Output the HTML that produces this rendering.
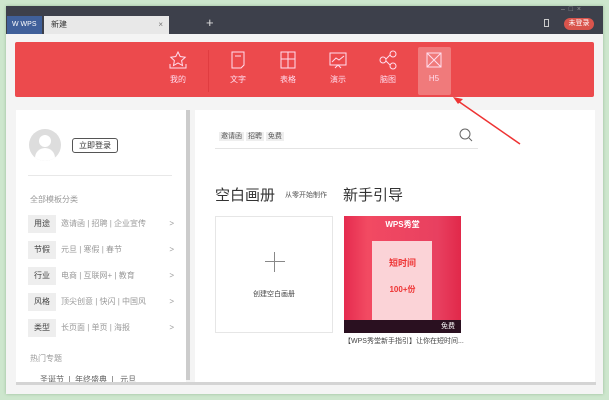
<!DOCTYPE html>
<html><head><meta charset="utf-8"><style>
*{margin:0;padding:0;box-sizing:border-box}
body{width:609px;height:400px;background:#cde6cd;font-family:"Liberation Sans","Noto Sans CJK SC",sans-serif;position:relative;overflow:hidden;font-size:8px;color:#555}
.a{position:absolute}
.win{left:6px;top:6px;width:597px;height:388px;background:#f4f4f4;overflow:hidden;box-shadow:0 0 3px #9b9}
.title{left:0;top:0;width:597px;height:28px;background:#3d404b}
.row{position:absolute;left:12px;height:18px;width:146px;font-size:8px;color:#999;line-height:18px}
.row b{display:inline-block;width:28px;background:#eee;color:#444;text-align:center;font-weight:normal;margin-right:5px}
.row i{position:absolute;right:0;font-style:normal}
.ic{position:absolute;top:8px;width:20px;height:20px}
.lb{position:absolute;top:32px;color:#fde;font-size:8px;width:40px;text-align:center}
</style></head><body>
<div class="a win">
 <div class="a title">
  <div class="a" style="left:1px;top:10px;width:35px;height:18px;background:#40609a;color:#fff;font-size:7px;line-height:18px;padding-left:5px">W WPS</div>
  <div class="a" style="left:38px;top:10px;width:125px;height:18px;background:#e8e8e8;color:#333;font-size:8px;line-height:18px;padding-left:7px">新建<span style="position:absolute;right:6px;color:#777">×</span></div>
  <div class="a" style="left:200px;top:9px;color:#ddd;font-size:13px">+</div>
  <div class="a" style="left:538px;top:13px;width:5px;height:8px;border:1px solid #ccc"></div>
  <div class="a" style="left:558px;top:12px;width:30px;height:12px;background:#d9544c;border-radius:6px;color:#fff;font-size:7px;line-height:12px;text-align:center">未登录</div>
  <div class="a" style="left:555px;top:0;color:#999;font-size:7px">–&nbsp;&nbsp;□&nbsp;&nbsp;×</div>
 </div>
 <div class="a" style="left:9px;top:36px;width:579px;height:55px;background:#ec4a4d;border-radius:2px">
  <div class="a" style="left:403px;top:5px;width:33px;height:48px;background:#f07a7b;border-radius:2px"></div>
  <div class="a" style="left:193px;top:8px;width:1px;height:42px;background:#e03c40"></div>
  <svg class="ic" style="left:153px" viewBox="0 0 20 20" fill="none" stroke="#fde" stroke-width="1"><path d="M10 2l2.2 4.5 5 .7-3.6 3.4.9 4.9L10 13l-4.5 2.5.9-4.9L2.8 7.2l5-.7z"/><path d="M2 14v4h16v-4"/></svg><div class="lb" style="left:143px">我的</div>
  <svg class="ic" style="left:213px" viewBox="0 0 20 20" fill="none" stroke="#fde"><path d="M4 2h12v13l-3 3H4z"/><path d="M7 6h6"/></svg><div class="lb" style="left:203px">文字</div>
  <svg class="ic" style="left:263px" viewBox="0 0 20 20" fill="none" stroke="#fde"><rect x="3" y="2" width="14" height="16"/><path d="M3 9h14M10 2v16"/></svg><div class="lb" style="left:253px">表格</div>
  <svg class="ic" style="left:313px" viewBox="0 0 20 20" fill="none" stroke="#fde"><rect x="2" y="3" width="16" height="12"/><path d="M4 12l4-4 3 2 5-4M7 18l3-3 3 3"/></svg><div class="lb" style="left:303px">演示</div>
  <svg class="ic" style="left:363px" viewBox="0 0 20 20" fill="none" stroke="#fde"><circle cx="5" cy="10" r="3"/><circle cx="15" cy="4" r="3"/><circle cx="15" cy="16" r="3"/><path d="M8 9l4-4M8 11l4 4"/></svg><div class="lb" style="left:353px">脑图</div>
  <svg class="ic" style="left:409px" viewBox="0 0 20 20" fill="none" stroke="#fde"><rect x="3" y="3" width="14" height="14"/><path d="M3 3l14 14M17 3L3 17"/></svg><div class="lb" style="left:399px">H5</div>
 </div>
 <div class="a" style="left:10px;top:104px;width:170px;height:272px;background:#fff">
  <div class="a" style="left:13px;top:19px;width:32px;height:32px;border-radius:50%;background:#ddd;overflow:hidden"><div class="a" style="left:10px;top:6px;width:12px;height:12px;border-radius:50%;background:#fff"></div><div class="a" style="left:6px;top:19px;width:20px;height:14px;border-radius:10px 10px 0 0;background:#fff"></div></div>
  <div class="a" style="left:56px;top:28px;width:46px;height:15px;border:1px solid #555;border-radius:3px;font-size:8px;color:#333;text-align:center;line-height:13px">立即登录</div>
  <div class="a" style="left:12px;top:65px;width:144px;height:1px;background:#e8e8e8"></div>
  <div class="a" style="left:14px;top:84px;color:#999">全部模板分类</div>
  <div class="row" style="top:105px"><b>用途</b>邀请函 | 招聘 | 企业宣传<i>&gt;</i></div>
  <div class="row" style="top:131px"><b>节假</b>元旦 | 寒假 | 春节<i>&gt;</i></div>
  <div class="row" style="top:157px"><b>行业</b>电商 | 互联网+ | 教育<i>&gt;</i></div>
  <div class="row" style="top:183px"><b>风格</b>顶尖创意 | 快闪 | 中国风<i>&gt;</i></div>
  <div class="row" style="top:209px"><b>类型</b>长页面 | 单页 | 海报<i>&gt;</i></div>
  <div class="a" style="left:14px;top:243px;color:#999">热门专题</div>
  <div class="a" style="left:24px;top:264px;color:#666">圣诞节 &nbsp;| &nbsp;年终盛典 &nbsp;| &nbsp;&nbsp;元旦</div>
 </div>
 <div class="a" style="left:180px;top:104px;width:4px;height:270px;background:#ccc"></div>
 <div class="a" style="left:189px;top:104px;width:400px;height:272px;background:#fff">
  <div class="a" style="left:24px;top:21px;font-size:7px;color:#555"><span style="background:#eee;padding:1px 2px">邀请函</span> <span style="background:#eee;padding:1px 2px">招聘</span> <span style="background:#eee;padding:1px 2px">免费</span></div>
  <svg class="a" style="left:264px;top:18px" width="14" height="14" fill="none" stroke="#666"><circle cx="6" cy="6" r="5"/><path d="M10 10l3 3"/></svg>
  <div class="a" style="left:20px;top:38px;width:263px;height:1px;background:#e4e4e4"></div>
  <div class="a" style="left:20px;top:74px;font-size:15px;color:#333">空白画册</div>
  <div class="a" style="left:90px;top:80px;font-size:7px;color:#555">从零开始制作</div>
  <div class="a" style="left:148px;top:74px;font-size:15px;color:#333">新手引导</div>
  <div class="a" style="left:20px;top:106px;width:118px;height:117px;border:1px solid #e6e6e6">
   <div class="a" style="left:49px;top:44px;width:20px;height:1px;background:#888"></div>
   <div class="a" style="left:58px;top:35px;width:1px;height:20px;background:#888"></div>
   <div class="a" style="left:0;width:116px;top:72px;text-align:center;font-size:7px;color:#444">创建空白画册</div>
  </div>
  <div class="a" style="left:149px;top:106px;width:117px;height:117px;background:linear-gradient(90deg,#e52b4f,#f24a62 20%,#e84060 80%,#e1284a);overflow:hidden">
   <div class="a" style="left:28px;top:25px;width:60px;height:90px;background:#fbd3d7"></div>
   <div class="a" style="left:0;width:117px;top:3px;text-align:center;color:#fff;font-size:8px;font-weight:bold">WPS秀堂</div>
   <div class="a" style="left:0;width:117px;top:40px;text-align:center;color:#e33;font-size:9px;font-weight:bold">短时间</div>
   <div class="a" style="left:0;width:117px;top:68px;text-align:center;color:#e33;font-size:8px;font-weight:bold">100+份</div>
   <div class="a" style="left:0;top:104px;width:117px;height:13px;background:#2a1020;color:#fff;font-size:7px;text-align:right;padding-right:6px;line-height:13px">免费</div>
  </div>
  <div class="a" style="left:149px;top:226px;font-size:7px;color:#444;white-space:nowrap">【WPS秀堂新手指引】让你在短时间...</div>
 </div>
 <div class="a" style="left:10px;top:376px;width:580px;height:3px;background:#d4d4d4"></div>
</div>
<svg class="a" style="left:0;top:0" width="609" height="400"><path d="M520 144L458 101" stroke="#e33" stroke-width="1.5"/><path d="M453 97l10 2-5 5z" fill="#e33"/></svg>
</body></html>
